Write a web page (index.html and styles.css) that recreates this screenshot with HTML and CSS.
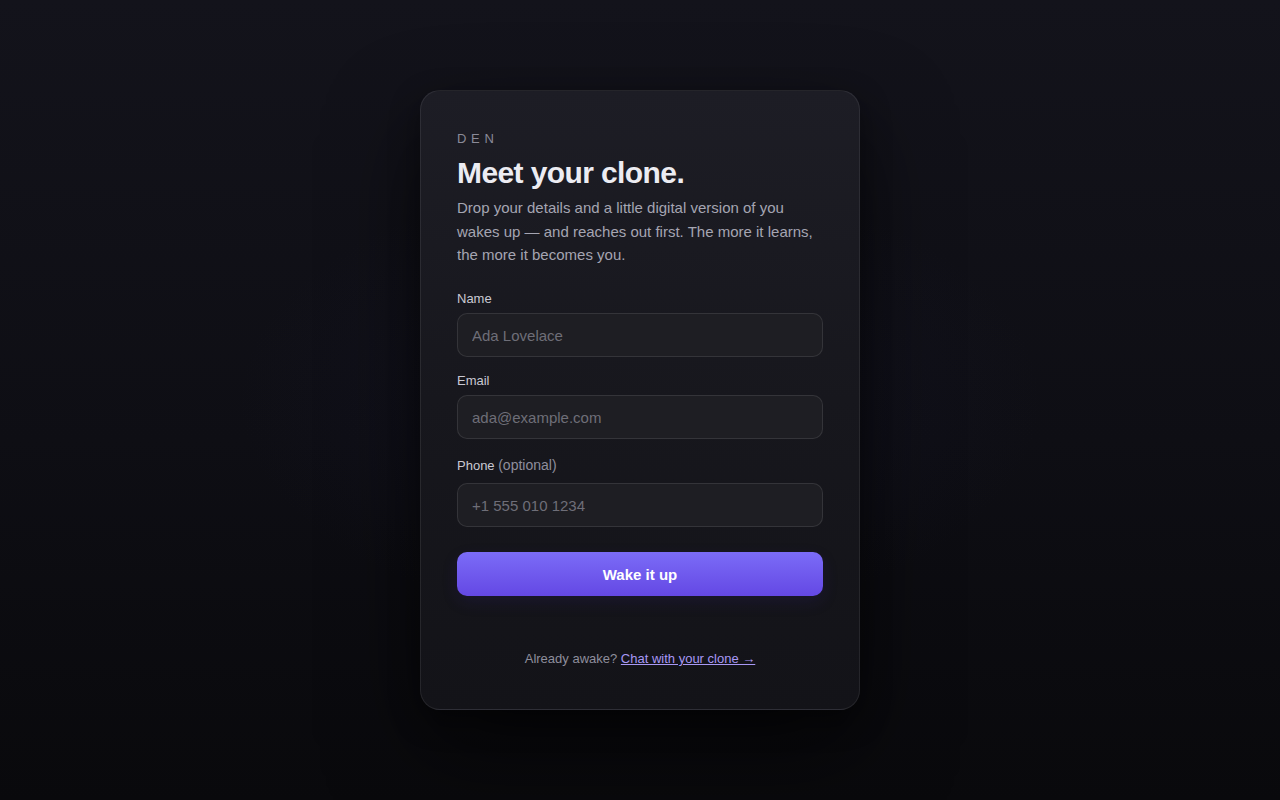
FILE: index.html
```html
<!DOCTYPE html>
<html lang="en">
<head>
<meta charset="utf-8">
<title>Den — Meet your clone</title>
<link rel="stylesheet" href="styles.css">
</head>
<body>
<main class="page">
  <section class="card">
    <div class="brand">DEN</div>
    <h1 class="title">Meet your clone.</h1>
    <p class="lead">Drop your details and a little digital version of you wakes up — and reaches out first. The more it learns, the more it becomes you.</p>
    <form class="form">
      <div class="field">
        <label class="label" for="name">Name</label>
        <input class="input" id="name" type="text" placeholder="Ada Lovelace">
      </div>
      <div class="field">
        <label class="label" for="email">Email</label>
        <input class="input" id="email" type="email" placeholder="ada@example.com">
      </div>
      <div class="field">
        <label class="label label-tall" for="phone">Phone <span class="opt">(optional)</span></label>
        <input class="input" id="phone" type="tel" placeholder="+1 555 010 1234">
      </div>
      <button class="btn" type="button">Wake it up</button>
    </form>
    <p class="foot">Already awake? <a class="link" href="#">Chat with your clone →</a></p>
  </section>
</main>
</body>
</html>
```
FILE: styles.css
```css
* { box-sizing: border-box; }
html, body { height: 100%; }
body {
  margin: 0;
  font-family: "Liberation Sans", Arial, sans-serif;
  color: #e8e8ee;
  background:
    radial-gradient(ellipse 45% 40% at 50% 50%, rgba(40, 40, 90, 0.16), rgba(0,0,0,0) 70%),
    linear-gradient(180deg, #13131b 0%, #0e0e14 55%, #09090c 100%);
}
.page {
  min-height: 100vh;
  display: flex;
  justify-content: center;
  align-items: flex-start;
  padding-top: 90px;
}
.card {
  width: 440px;
  padding: 40px 36px 42px;
  border-radius: 20px;
  border: 1px solid rgba(255, 255, 255, 0.08);
  background: linear-gradient(180deg, #1d1d25 0%, #17171d 50%, #131318 100%);
  box-shadow: 0 40px 90px rgba(0, 0, 0, 0.55), 0 10px 30px rgba(0, 0, 0, 0.35);
}
.brand {
  font-size: 13px;
  line-height: 16px;
  letter-spacing: 0.36em;
  color: #8a8a98;
}
.title {
  margin: 8px 0 0;
  font-size: 30px;
  line-height: 36px;
  font-weight: 700;
  letter-spacing: -0.02em;
  color: #ececf2;
}
.lead {
  margin: 5px 0 0;
  font-size: 15px;
  line-height: 23.5px;
  color: #a5a5b2;
}
.form {
  margin-top: 24.5px;
  display: flex;
  flex-direction: column;
  gap: 16px;
}
.field {
  display: flex;
  flex-direction: column;
  gap: 6px;
}
.label {
  font-size: 13px;
  line-height: 16px;
  color: #c9c9d3;
}
.label-tall {
  height: 22px;
  line-height: 22px;
}
.opt {
  font-size: 14px;
  line-height: 1;
  color: #8e8e9c;
}
.input {
  height: 44px;
  width: 100%;
  padding: 0 14px;
  border-radius: 10px;
  border: 1px solid rgba(255, 255, 255, 0.1);
  background: #1e1e23;
  font-family: inherit;
  font-size: 15px;
  color: #e8e8ee;
  outline: none;
}
.input::placeholder { color: #6e6e78; }
.btn {
  margin-top: 9px;
  height: 44px;
  width: 100%;
  border: 0;
  border-radius: 10px;
  background: linear-gradient(180deg, #7b6cf7 0%, #6448e4 100%);
  box-shadow: 0 6px 16px rgba(60, 40, 160, 0.15);
  color: #ffffff;
  font-family: inherit;
  font-size: 15px;
  font-weight: 700;
  cursor: pointer;
}
.foot {
  margin: 55px 0 0;
  text-align: center;
  font-size: 13px;
  line-height: 16px;
  color: #8e8e9c;
}
.link {
  color: #a898f5;
  text-decoration: underline;
}
```
